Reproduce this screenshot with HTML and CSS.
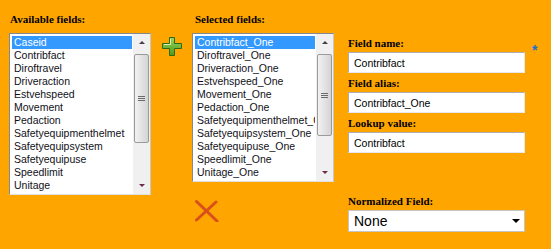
FILE: index.html
```
<!DOCTYPE html>
<html lang="en">
<head>
    <meta charset="UTF-8">
    <meta name="viewport" content="width=device-width, initial-scale=1.0">
    <title>Field Mapping</title>
    <link rel="stylesheet" href="styles.css">
</head>
<body>

    <div class="page">

        <!-- source fields -->
        <div class="column">
            <div class="list-label">Available fields:</div>
            <div class="listbox tall">
                <ul class="items">
                    <li class="selected">Caseid</li>
                    <li>Contribfact</li>
                    <li>Diroftravel</li>
                    <li>Driveraction</li>
                    <li>Estvehspeed</li>
                    <li>Movement</li>
                    <li>Pedaction</li>
                    <li>Safetyequipmenthelmet</li>
                    <li>Safetyequipsystem</li>
                    <li>Safetyequipuse</li>
                    <li>Speedlimit</li>
                    <li>Unitage</li>
                </ul>
                <div class="scrollbar">
                    <div class="arrow up"></div>
                    <div class="track"><div class="thumb thumb-tall"><span class="grip"></span></div></div>
                    <div class="arrow down"></div>
                </div>
            </div>
        </div>

        <button class="icon-btn add" title="Add field">
            <svg width="20" height="19" viewBox="0 0 20 19">
                <defs>
                    <linearGradient id="plusFill" x1="0" y1="0" x2="0" y2="1">
                        <stop offset="0" stop-color="#9ad45e"/>
                        <stop offset="1" stop-color="#4c9a1c"/>
                    </linearGradient>
                </defs>
                <path d="M7.5 0.5 H12.5 V6.5 H19.5 V11.5 H12.5 V18.5 H7.5 V11.5 H0.5 V6.5 H7.5 Z" fill="url(#plusFill)" stroke="#2f6a12" stroke-width="1"/>
                <path d="M8.5 2 V7.5 H2" fill="none" stroke="#d8f2b8" stroke-width="1"/>
            </svg>
        </button>

        <!-- selected fields -->
        <div class="column selected-col">
            <div class="list-label indent">Selected fields:</div>
            <div class="listbox short">
                <ul class="items">
                    <li class="selected">Contribfact_One</li>
                    <li>Diroftravel_One</li>
                    <li>Driveraction_One</li>
                    <li>Estvehspeed_One</li>
                    <li>Movement_One</li>
                    <li>Pedaction_One</li>
                    <li>Safetyequipmenthelmet_One</li>
                    <li>Safetyequipsystem_One</li>
                    <li>Safetyequipuse_One</li>
                    <li>Speedlimit_One</li>
                    <li>Unitage_One</li>
                </ul>
                <div class="scrollbar">
                    <div class="arrow up"></div>
                    <div class="track"><div class="thumb thumb-short"><span class="grip"></span></div></div>
                    <div class="arrow down"></div>
                </div>
            </div>
            <button class="icon-btn remove" title="Remove field">
                <svg width="24" height="22" viewBox="0 0 24 22">
                    <path d="M1.5 1.5 L22 21" stroke="#d8501c" stroke-width="3" stroke-linecap="round"/>
                    <path d="M21 2 L1.5 20" stroke="#d8501c" stroke-width="3" stroke-linecap="round"/>
                </svg>
            </button>
        </div>

        <!-- field properties -->
        <div class="details">
            <div class="name-row">
                <div class="field">
                    <label for="fieldName">Field name:</label>
                    <input type="text" id="fieldName" value="Contribfact">
                </div>
                <span class="required">*</span>
            </div>
            <div class="field">
                <label for="fieldAlias">Field alias:</label>
                <input type="text" id="fieldAlias" value="Contribfact_One">
            </div>
            <div class="field">
                <label for="lookup">Lookup value:</label>
                <input type="text" id="lookup" value="Contribfact">
            </div>
            <div class="field normalized">
                <label>Normalized Field:</label>
                <div class="dropdown">
                    <span>None</span>
                    <span class="caret"></span>
                </div>
            </div>
        </div>

    </div>

</body>
</html>
```

FILE: styles.css
```
body {
    margin: 0;
    background-color: #ffa500;
    font-family: "Liberation Sans", Arial, sans-serif;
    font-size: 10.5px;
}

.page {
    display: flex;
    align-items: flex-start;
    padding: 12px 0 0 9px;
}

.column {
    display: flex;
    flex-direction: column;
    width: 142px;
}

.list-label,
.field label {
    display: block;
    font-family: "Liberation Serif", "Times New Roman", serif;
    font-weight: bold;
    font-size: 11px;
    line-height: 14px;
    color: #000;
}

.list-label {
    margin: 0 0 7px 1px;
}

.list-label.indent {
    margin-left: 3px;
}

.listbox {
    display: flex;
    box-sizing: border-box;
    background: #fff;
    border: 1px solid;
    border-color: #828790 #c8c8c8 #e0e0e0 #828790;
    padding: 0 0 0 2px;
}

.listbox.tall {
    height: 162px;
}

.listbox.short {
    height: 149px;
}

.items {
    list-style: none;
    margin: 0;
    padding: 2px 0 0;
    flex: 1;
    overflow: hidden;
}

.items li {
    height: 13px;
    line-height: 13px;
    padding-left: 2px;
    white-space: nowrap;
    overflow: hidden;
    color: #101018;
}

.items li.selected {
    background: #3399ff;
    color: #fff;
}

.scrollbar {
    display: flex;
    flex-direction: column;
    width: 17px;
    margin-left: 1px;
    background: #f0f0f0;
}

.arrow {
    height: 17px;
    display: flex;
    align-items: center;
    justify-content: center;
}

.arrow::before {
    content: "";
    border-left: 3px solid transparent;
    border-right: 3px solid transparent;
}

.arrow.up::before {
    border-bottom: 3px solid #4a3b4a;
}

.arrow.down::before {
    border-top: 3px solid #6b2b4a;
}

.track {
    flex: 1;
    padding-top: 3px;
}

.thumb {
    box-sizing: border-box;
    margin: 0 1px;
    border: 1px solid #9a9a9a;
    border-radius: 2px;
    background: linear-gradient(to right, #f2f2f2, #d4d4d4);
    display: flex;
    align-items: center;
    justify-content: center;
}

.thumb-tall {
    height: 89px;
}

.thumb-short {
    height: 82px;
}

.grip {
    width: 7px;
    height: 5px;
    background: repeating-linear-gradient(to bottom, #6a6a6a 0, #6a6a6a 1px, transparent 1px, transparent 2px);
}

.icon-btn {
    border: none;
    background: none;
    padding: 0;
    cursor: pointer;
    display: block;
}

.icon-btn svg {
    display: block;
}

.add {
    margin: 25px 10px 0 11px;
}

.remove {
    margin: 18px 0 0 3px;
}

.details {
    display: flex;
    flex-direction: column;
    margin: 24px 0 0 14px;
}

.name-row {
    display: flex;
    align-items: flex-start;
}

.required {
    color: #1f6fd6;
    font-size: 14px;
    font-weight: bold;
    line-height: 13px;
    margin: 8px 0 0 7px;
}

.field {
    display: flex;
    flex-direction: column;
    margin-top: 3px;
}

.name-row .field {
    margin-top: 0;
}

.field label {
    margin-bottom: 2px;
}

.field input {
    box-sizing: border-box;
    width: 177px;
    height: 21px;
    margin: 0;
    padding: 0 5px;
    border: 1px solid;
    border-color: #abadb3 #e3e9ef #e3e9ef #abadb3;
    background: #fff;
    font-family: "Liberation Sans", Arial, sans-serif;
    font-size: 10.5px;
    color: #000;
}

.normalized {
    margin-top: 41px;
}

.dropdown {
    box-sizing: border-box;
    width: 177px;
    height: 22px;
    display: flex;
    align-items: center;
    justify-content: space-between;
    padding: 0 4px 0 5px;
    border: 1px solid #c5c5c5;
    background: #fff;
    font-size: 14px;
    color: #000;
}

.caret {
    border-left: 4px solid transparent;
    border-right: 4px solid transparent;
    border-top: 4px solid #000;
}
```
